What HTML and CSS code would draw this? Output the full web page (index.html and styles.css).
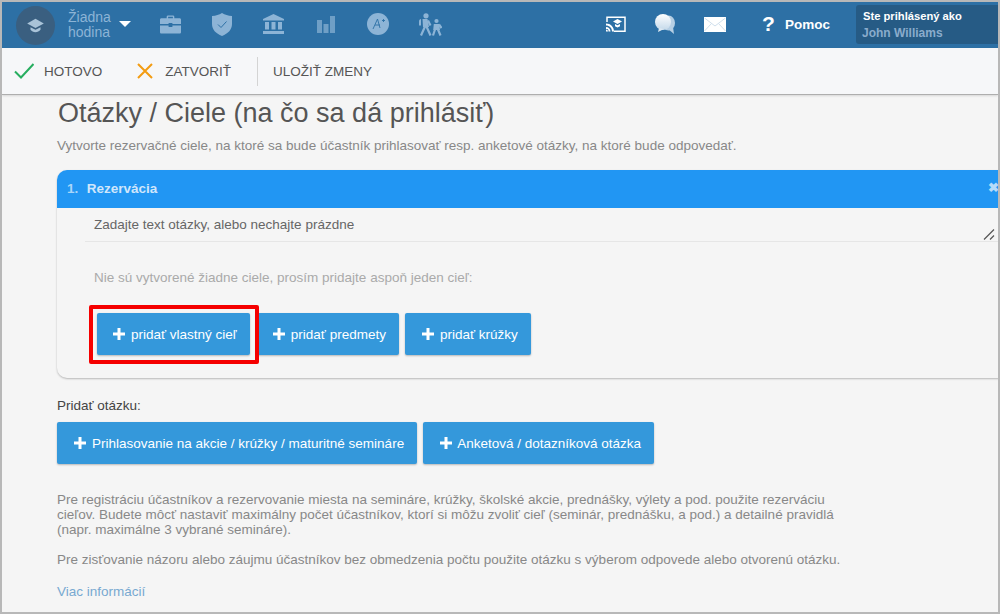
FILE: index.html
```html
<!DOCTYPE html>
<html lang="sk">
<head>
<meta charset="utf-8">
<title>Otázky / Ciele</title>
<link rel="stylesheet" href="styles.css">
</head>
<body>
<div class="frame">
  <header class="topbar">
    <div class="avatar">
      <svg width="17" height="15" viewBox="0 0 20 18"><path class="cap-top" d="M10 1 20 6.500 10 12 0 6.500Z"/><path class="cap-top" d="M4 11l6 3.200L16 11v3.200C14.500 16 12.500 17 10 17s-4.500-1-6-2.800Z"/></svg>
    </div>
    <div class="period">Žiadna<br>hodina</div>
    <span class="caret"></span>
    <nav class="modules">
      <svg width="21" height="19" viewBox="0 0 22 19"><path class="dim" d="M7 3V1.500C7 .6 7.600 0 8.500 0h5c.9 0 1.500.6 1.500 1.500V3h5.500C21.400 3 22 3.600 22 4.500V9H13V8H9v1H0V4.500C0 3.600.6 3 1.500 3ZM8.500 1.500V3h5V1.500ZM0 10.500h9V12h4v-1.500h9v7c0 .9-.6 1.500-1.500 1.500h-19C.6 19 0 18.400 0 17.500Z"/></svg>
      <svg width="20" height="23" viewBox="0 0 20 23"><path class="dim" d="M10 0c3 1.800 6 2.800 10 3v8c0 5.500-3.800 9.500-10 12C3.800 20.500 0 16.500 0 11V3c4-.2 7-1.200 10-3Z"/><path class="notch" d="M6 11.500l3 3 5.500-6"/></svg>
      <svg width="21" height="20" viewBox="0 0 21 20"><path class="dim" d="M10.500 0 21 5v1.500H0V5ZM2 8h4v7.500H2ZM8.500 8h4v7.500h-4ZM15 8h4v7.500h-4ZM0 17h21v3H0Z"/></svg>
      <svg width="18" height="17" viewBox="0 0 18 17"><path class="dim dimmer" d="M0 4h5v13H0ZM6.500 8h5v9h-5ZM13 0h5v17h-5Z"/></svg>
      <svg width="22" height="22" viewBox="0 0 22 22"><circle class="dim" cx="11" cy="11" r="11"/><path class="notch thin" d="M6 16 10.500 6l2.500 9M8 12h5M15 7.500h3M16.500 6v3"/></svg>
      <svg width="23" height="23" viewBox="0 0 23 23"><circle class="dim" cx="7" cy="2.800" r="2.600"/><circle class="dim" cx="17.500" cy="8" r="2.100"/><path class="dim" d="M0 8.500C0 7 .8 6 2 6v6.500H0ZM3.500 6h5l1.500 8H4Z"/><path class="dim" d="M14.800 11h5.400l.8 6h-6.800Z"/><path class="walker" d="M6 13.500 2 22.500M7.500 13.500 11.500 22.500M9 7.500l2.500 5"/><path class="walker child" d="M16 16.500 14 22.500M19 16.500 21.500 22.500M20 11.500l2.500 3.500"/></svg>
    </nav>
    <div class="tools">
      <svg width="20" height="16" viewBox="0 0 20 16"><path class="line" d="M1 6V1.200h18v14H8"/><path class="solid" d="M0 7.500c4.500 0 8 3.500 8 8H6C6 12 3.500 9.500 0 9.500ZM0 11c2.500 0 4.500 2 4.500 4.500h-2C2.500 13.300 2.200 13 0 13ZM0 13.500a2 2 0 0 1 2 2H0ZM11.500 3l4.500 2.500L11.500 8 7 5.500ZM9 8l2.500 1.300L14 8v2.200l-2.500 1.300L9 10.200Z"/></svg>
      <svg width="20" height="20" viewBox="0 0 20 20"><defs><linearGradient id="bubble" x1="0" y1="0" x2="0" y2="1"><stop offset="0" stop-color="#fff"/><stop offset="1" stop-color="#c4d9ea"/></linearGradient></defs><ellipse cx="13.500" cy="9" rx="6.500" ry="7.500" fill="#b6cfe4"/><path fill="#b6cfe4" d="M13 15l6 5-1-7Z"/><ellipse cx="8" cy="8" rx="8" ry="8" fill="url(#bubble)"/><path fill="#dce8f2" d="M4 14l-1 4 6-3Z"/></svg>
      <svg width="22" height="15" viewBox="0 0 22 15"><rect class="solid" width="22" height="15"/><path class="fold" d="M.5 1 11 9 21.500 1M.5 14 7.500 6.500M21.500 14 14.500 6.500"/></svg>
      <a class="help"><b class="mark">?</b><b class="help-label">Pomoc</b></a>
    </div>
    <div class="user">
      <div class="user-label">Ste prihlásený ako</div>
      <div class="user-name">John Williams</div>
    </div>
  </header>

  <div class="toolbar">
    <a class="action action-done">
      <svg width="20" height="16" viewBox="0 0 20 16"><path class="ok" d="M1 8.500 7 14.500 19.500 1"/></svg>
      HOTOVO
    </a>
    <a class="action action-close">
      <svg width="16" height="16" viewBox="0 0 16 16"><path class="no" d="M1 1l14 14M15 1 1 15"/></svg>
      ZATVORIŤ
    </a>
    <a class="action action-save">ULOŽIŤ ZMENY</a>
  </div>

  <main class="content">
    <h1>Otázky / Ciele (na čo sa dá prihlásiť)</h1>
    <p class="lead">Vytvorte rezervačné ciele, na ktoré sa bude účastník prihlasovať resp. anketové otázky, na ktoré bude odpovedať.</p>

    <section class="card">
      <div class="card-head">
        <span class="num">1.</span>
        <span class="card-title">Rezervácia</span>
        <span class="card-x">✖</span>
      </div>
      <div class="question">
        <span>Zadajte text otázky, alebo nechajte prázdne</span>
        <svg class="grip" width="12" height="11" viewBox="0 0 12 11"><path d="M1 10.500 11 .5M7 10.500l4-4"/></svg>
      </div>
      <p class="empty">Nie sú vytvorené žiadne ciele, prosím pridajte aspoň jeden cieľ:</p>
      <div class="buttons in-card">
        <button class="btn btn-first"><svg class="plus" width="12" height="12" viewBox="0 0 12 12"><path d="M6 0v12M0 6h12"/></svg>pridať vlastný cieľ<span class="highlight"></span></button>
        <button class="btn"><svg class="plus" width="12" height="12" viewBox="0 0 12 12"><path d="M6 0v12M0 6h12"/></svg>pridať predmety</button>
        <button class="btn"><svg class="plus" width="12" height="12" viewBox="0 0 12 12"><path d="M6 0v12M0 6h12"/></svg>pridať krúžky</button>
      </div>
    </section>

    <div class="add-label">Pridať otázku:</div>
    <div class="buttons">
      <button class="btn"><svg class="plus" width="12" height="12" viewBox="0 0 12 12"><path d="M6 0v12M0 6h12"/></svg>Prihlasovanie na akcie / krúžky / maturitné semináre</button>
      <button class="btn btn-tight"><svg class="plus" width="12" height="12" viewBox="0 0 12 12"><path d="M6 0v12M0 6h12"/></svg>Anketová / dotazníková otázka</button>
    </div>

    <p class="note first">Pre registráciu účastníkov a rezervovanie miesta na semináre, krúžky, školské akcie, prednášky, výlety a pod. použite rezerváciu cieľov. Budete môcť nastaviť maximálny počet účastníkov, ktorí si môžu zvoliť cieľ (seminár, prednášku, a pod.) a detailné pravidlá (napr. maximálne 3 vybrané semináre).</p>
    <p class="note second">Pre zisťovanie názoru alebo záujmu účastníkov bez obmedzenia počtu použite otázku s výberom odpovede alebo otvorenú otázku.</p>
    <a class="more">Viac informácií</a>
  </main>
</div>
</body>
</html>
```

FILE: styles.css
```css
* { box-sizing: border-box; }
html, body { margin: 0; padding: 0; }
body { width: 1000px; height: 614px; overflow: hidden; font-family: "Liberation Sans", Arial, sans-serif; }

.frame {
  width: 1000px;
  height: 614px;
  border: 2px solid #b8b8b8;
  background: #f5f5f5;
  overflow: hidden;
  display: flex;
  flex-direction: column;
}

/* top bar */
.topbar {
  flex: 0 0 46px;
  background: #2d70a5;
  display: flex;
  align-items: center;
  padding-left: 14px;
}
.topbar > * { flex-shrink: 0; }
.avatar {
  width: 39px;
  height: 39px;
  border-radius: 50%;
  background: #3a5f80;
  display: flex;
  align-items: center;
  justify-content: center;
}
.cap-top { fill: #a9c3d8; }
.period {
  margin-left: 13px;
  width: 43px;
  font-size: 14px;
  line-height: 15px;
  color: #8cb4d6;
}
.caret {
  margin-left: 8px;
  margin-top: -2px;
  border-left: 6px solid transparent;
  border-right: 6px solid transparent;
  border-top: 6px solid #fff;
}
.modules { display: flex; align-items: center; margin: -2px 0 0 29px; }
.modules svg { display: block; }
.modules svg:nth-child(2) { margin-left: 31px; }
.modules svg:nth-child(3) { margin-left: 31px; }
.modules svg:nth-child(4) { margin-left: 33px; }
.modules svg:nth-child(5) { margin-left: 32px; }
.modules svg:nth-child(6) { margin-left: 30px; }
.dim { fill: #8db4d6; }
.dimmer { fill: #6f9fc6; }
.notch { fill: none; stroke: #2d70a5; stroke-width: 1; }
.notch.thin { stroke-width: .9; }
.walker { fill: none; stroke: #8db4d6; stroke-width: 2.200; }
.tools { display: flex; align-items: center; margin: -2px 0 0 164px; }
.tools svg { display: block; }
.tools svg:nth-child(2) { margin-left: 29px; }
.tools svg:nth-child(3) { margin-left: 29px; }
.line { fill: none; stroke: #fff; stroke-width: 1.500; }
.solid { fill: #fff; }
.fold { fill: none; stroke: #cfdfec; stroke-width: 1; }
.help { display: flex; align-items: center; margin-left: 36px; color: #fff; }
.mark { font-size: 21px; width: 23px; }
.help-label { font-size: 13.500px; }
.user {
  margin-left: auto;
  margin-top: -1px;
  width: 142px;
  height: 39px;
  background: #265b85;
  border-radius: 3px 0 0 3px;
  padding: 4px 0 0 7px;
}
.user-label { font-size: 11.200px; line-height: 14px; font-weight: bold; color: #fff; }
.user-name { margin-left: -1px; font-size: 12px; line-height: 20px; font-weight: bold; color: #8aaccc; }

/* toolbar */
.toolbar {
  flex: 0 0 47px;
  background: #f6f7f9;
  border-bottom: 1px solid #aeaeae;
  box-shadow: 0 1px 2px rgba(0, 0, 0, .12);
  display: flex;
  align-items: center;
  padding-left: 12px;
}
.action {
  display: flex;
  align-items: center;
  font-size: 13.500px;
  color: #555;
}
.action-done svg { margin-right: 10px; }
.action-close { margin-left: 35px; }
.action-close svg { margin-right: 12px; }
.action-save {
  margin-left: 26px;
  border-left: 1px solid #d4d4d4;
  height: 29px;
  padding-left: 15px;
}
.ok { fill: none; stroke: #27ae60; stroke-width: 2; }
.no { fill: none; stroke: #f39c12; stroke-width: 2; }

/* content */
.content { padding: 0 0 0 55px; }
h1 {
  margin: 2px 0 0 1px;
  font-size: 27px;
  line-height: 32px;
  font-weight: normal;
  color: #555;
}
.lead { margin: 9px 0 0; font-size: 13.500px; line-height: 16px; color: #888; white-space: nowrap; }

.card {
  margin-top: 16px;
  width: 960px;
  height: 208px;
  border-radius: 10px;
  box-shadow: 0 1px 2px rgba(0, 0, 0, .25);
  background: #f5f5f5;
}
.card-head {
  height: 38px;
  background: #2196f3;
  border-radius: 10px 10px 0 0;
  display: flex;
  align-items: center;
  padding: 0 0 2px 10px;
  font-size: 13.500px;
  font-weight: bold;
  color: #cfe6fb;
  position: relative;
}
.card-title { margin-left: 8.500px; }
.num { color: #a9d5f9; }
.card-x { position: absolute; left: 931px; top: 10px; color: #b5dbfa; font-size: 13px; }
.question {
  margin-left: 28px;
  height: 34px;
  border-bottom: 1px solid #e6e6e6;
  font-size: 13.500px;
  color: #666;
  padding: 9px 0 0 9px;
  line-height: 16px;
  position: relative;
}
.grip { position: absolute; left: 898px; top: 21px; fill: none; stroke: #555; stroke-width: 1.200; }
.empty { margin: 28px 0 0 37px; font-size: 13.500px; line-height: 16px; color: #aaa; }

.buttons { display: flex; gap: 6px; }
.in-card { margin: 27px 0 0 40px; }
.btn {
  position: relative;
  height: 42px;
  border: 0;
  border-radius: 2px;
  background: #3498db;
  color: #fff;
  font: 13.500px "Liberation Sans", Arial, sans-serif;
  padding: 0 13px 0 17px;
  box-shadow: 0 1px 2px rgba(0, 0, 0, .25);
  display: flex;
  align-items: center;
}
.plus { flex: none; margin-right: 6px; fill: none; stroke: #fff; stroke-width: 3; }
.btn-first { padding-left: 16px; padding-right: 13px; }
.btn-tight .plus { margin-right: 5px; }
.highlight {
  position: absolute;
  left: -8px;
  right: -9px;
  top: -8px;
  bottom: -9px;
  border: 4px solid #f50000;
  border-radius: 2px;
  z-index: 2;
}

.add-label { margin-top: 20px; font-size: 13.500px; line-height: 16px; color: #444; }
.add-label + .buttons { margin-top: 8px; }

.note { margin: 0; width: 785px; font-size: 13.500px; line-height: 15px; color: #888; }
.note.first { margin-top: 28px; }
.note.second { margin-top: 15px; }
.more { display: block; margin-top: 17px; font-size: 13.500px; line-height: 16px; color: #78a9d1; }
```
